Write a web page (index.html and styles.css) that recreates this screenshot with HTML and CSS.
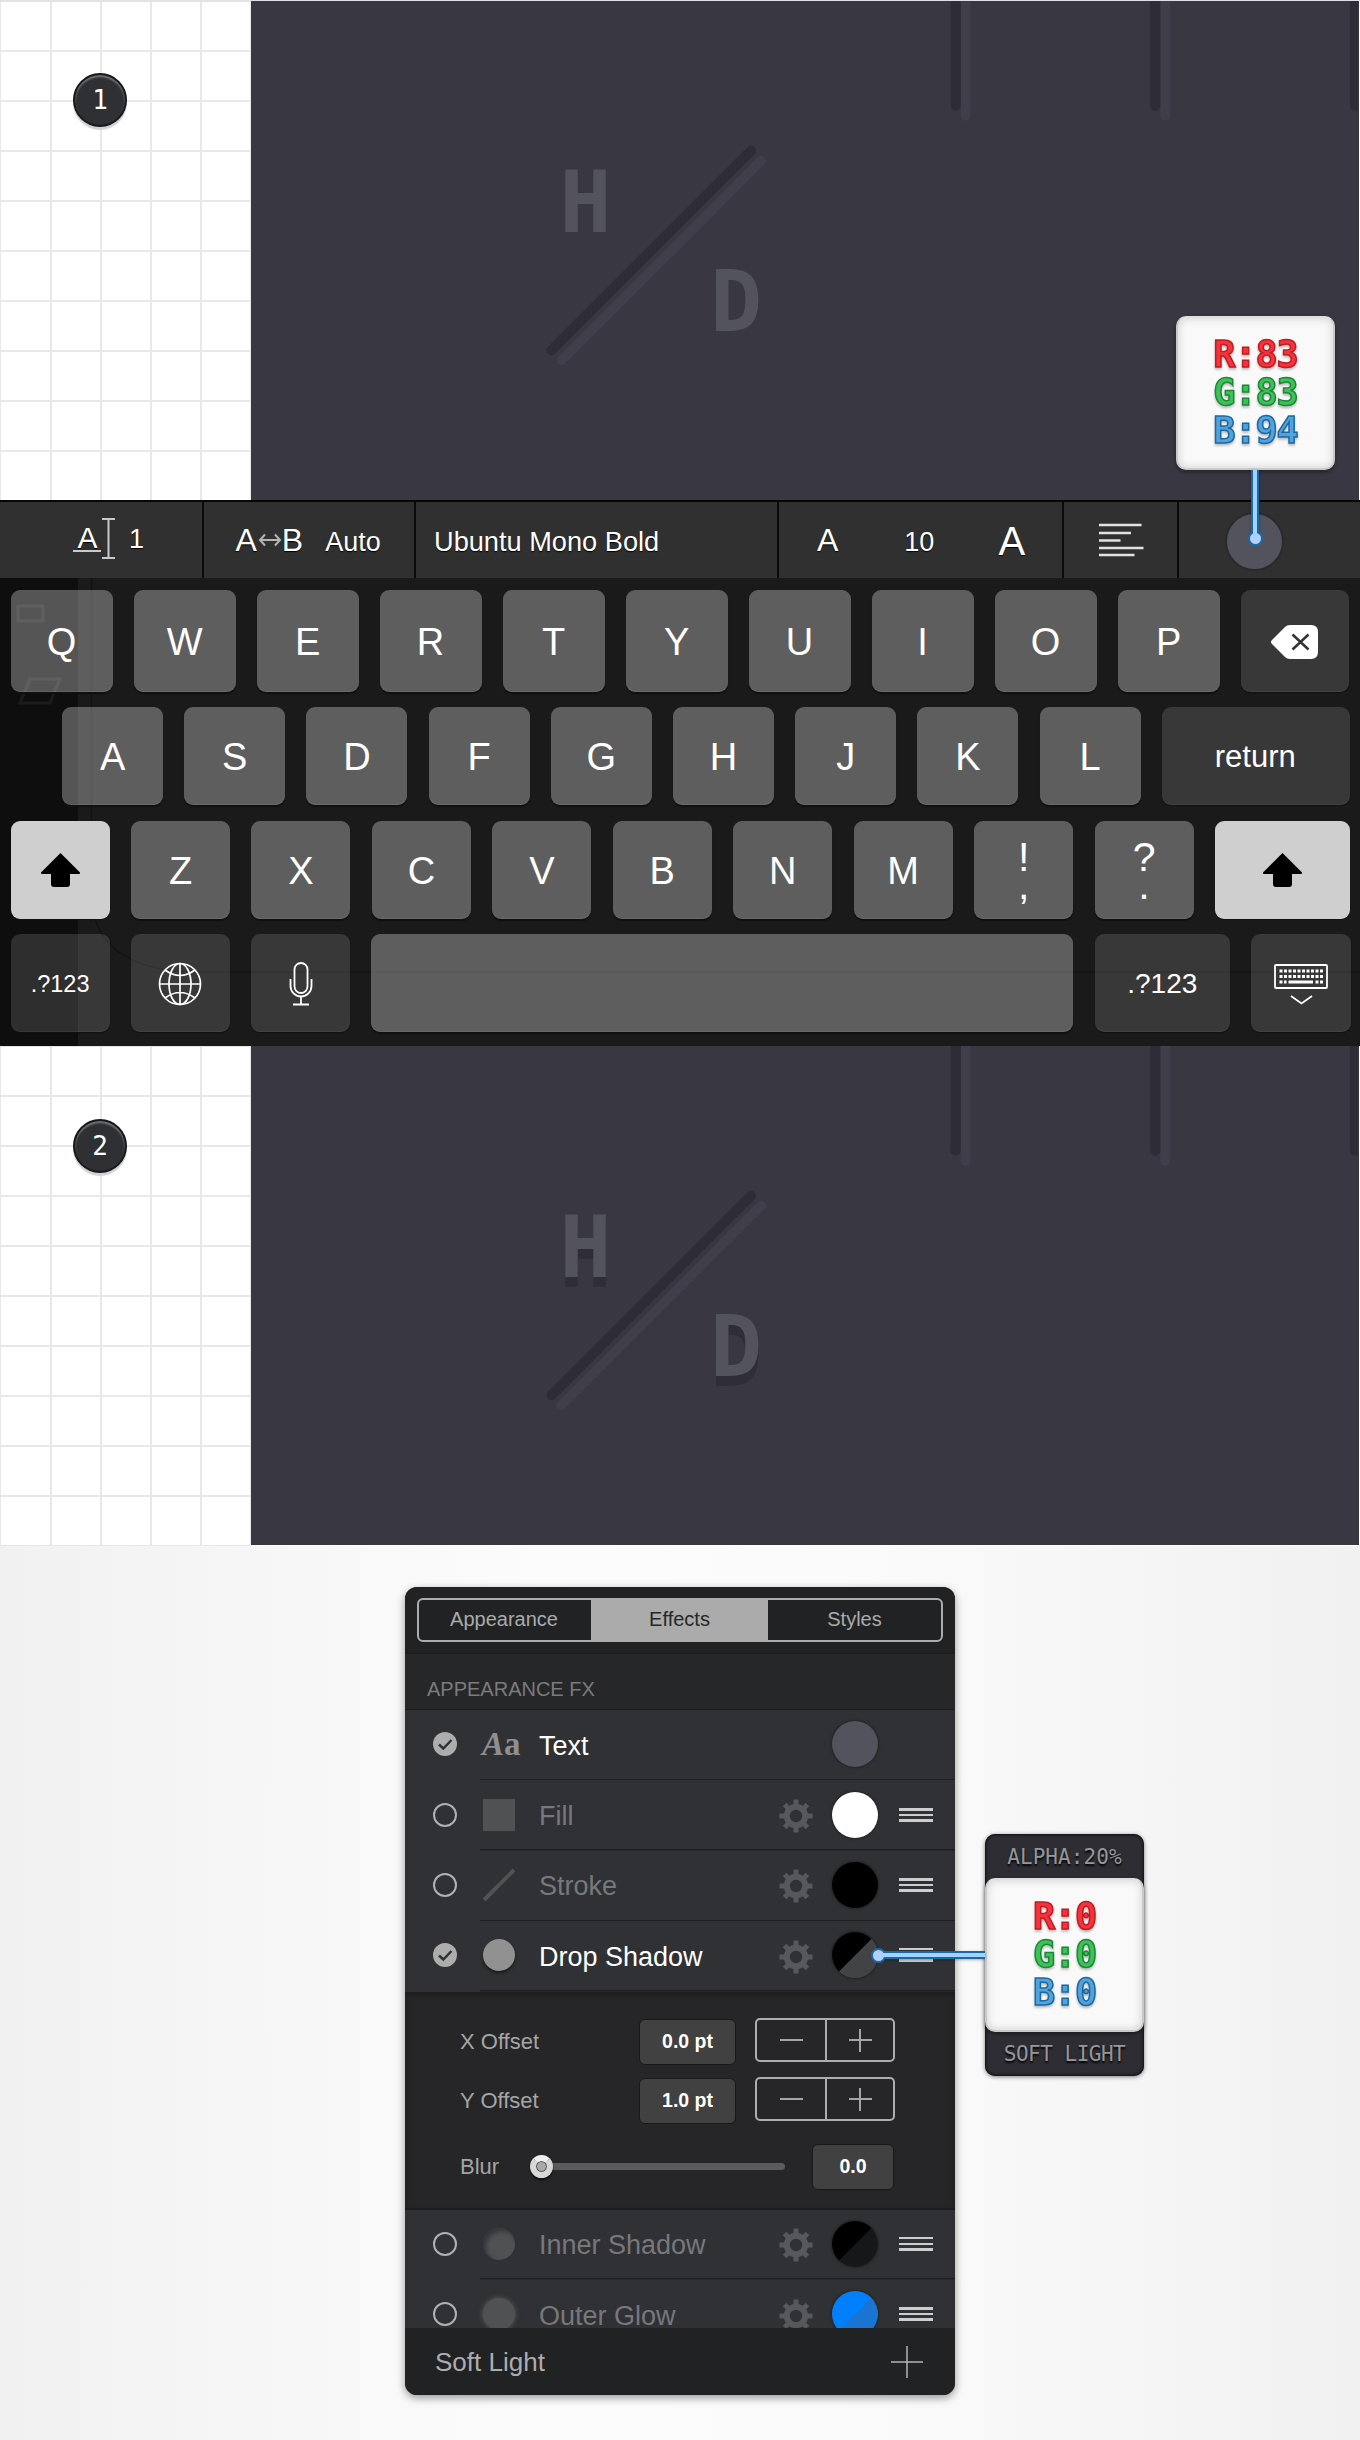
FILE: index.html
```html
<!DOCTYPE html>
<html lang="en">
<head>
<meta charset="utf-8">
<title>Dial lettering tutorial</title>
<link rel="stylesheet" href="styles.css">
</head>
<body>
<svg class="defs" aria-hidden="true">
  <defs>
    <symbol id="artboard" viewBox="0 0 1108 500">
      <g fill="none" stroke-width="10" stroke-linecap="round">
        <path class="ridge-light" d="M310 360 510 160M715-10V115M915-10V115"/>
        <path class="ridge-dark" d="M300 350 500 150M705-10V105M905-10V105M1105-10V105"/>
      </g>
    </symbol>
    <symbol id="gear" viewBox="-17 -17 34 34">
      <circle r="9.200" fill="none" stroke="currentColor" stroke-width="6"/>
      <g stroke="currentColor" stroke-width="5">
        <path d="M0-16.500V-11M0 16.500V11M-16.500 0H-11M16.500 0H11"/>
        <path d="M-11.400-11.400-8-8M11.400 11.400 8 8M-11.400 11.400-8 8M11.400-11.400 8-8"/>
      </g>
    </symbol>
    <symbol id="tick" viewBox="0 0 24 24">
      <circle cx="12" cy="12" r="12" fill="#adadad"/>
      <path d="M6 12.500 10.300 16.500 18.500 8" fill="none" stroke="#303134" stroke-width="2.400"/>
    </symbol>
    <symbol id="shift" viewBox="0 0 39 34">
      <path d="M19.500 0 39 19.500q.4 1.500-1 1.500H29V31q0 3-3 3H13q-3 0-3-3V21H1q-1.400 0-1-1.500Z"/>
    </symbol>
  </defs>
</svg>

<section class="canvas">
  <div class="gutter"><span class="step">1</span></div>
  <svg class="art" viewBox="0 0 1108 500">
    <use href="#artboard" width="1108" height="500"/>
    <text class="dial" x="334" y="231">H</text>
    <text class="dial" x="485" y="331">D</text>
  </svg>
</section>

<section class="keyboard">
  <div class="toolbar">
    <div class="tool tool-line">
      <svg width="44" height="44" viewBox="0 0 44 44"><text x="14.500" y="30.500" class="mini-a">A</text><path d="M0 34H28M29 2H42M29 41H42M35.500 2V41" stroke="#c9c9c9" stroke-width="2" fill="none"/></svg>
      <span>1</span>
    </div>
    <div class="tool tool-kern">
      <span class="a-mid">A</span>
      <svg width="22" height="14" viewBox="0 0 22 14"><path d="M1 7H21M6 1.500 1 7 6 12.500M16 1.500 21 7 16 12.500" fill="none" stroke="#b5b5b5" stroke-width="2"/></svg>
      <span class="a-mid">B</span><span class="auto">Auto</span>
    </div>
    <div class="tool tool-font">Ubuntu Mono Bold</div>
    <div class="tool tool-size"><span class="a-mid">A</span><span class="size">10</span><span class="a-big">A</span></div>
    <div class="tool tool-align"><svg width="45" height="34" viewBox="0 0 45 34"><path d="M0 2H42.500M0 10H32M0 17.500H21.500M0 25H44.500M0 32H35.500" stroke="#e2e2e2" stroke-width="2.600"/></svg></div>
    <div class="tool tool-color"><span class="text-color"></span></div>
  </div>
  <div class="keys">
    <div class="ghost">
      <svg width="1360" height="468" viewBox="0 0 1360 468"><g fill="none" stroke="#fff" stroke-opacity=".06" stroke-width="3"><path d="M18 28H43V43H18ZM30 101H60L50 125H20Z"/></g><path d="M91.500 0V325Q100 394 200 394H1360" fill="none" stroke="#000" stroke-opacity=".3" stroke-width="1.500"/></svg>
    </div>
    <div class="row row-1">
      <kbd>Q</kbd><kbd>W</kbd><kbd>E</kbd><kbd>R</kbd><kbd>T</kbd><kbd>Y</kbd><kbd>U</kbd><kbd>I</kbd><kbd>O</kbd><kbd>P</kbd>
      <kbd class="fn"><svg width="47" height="34" viewBox="0 0 47 34"><path d="M19 0H40Q47 0 47 7V27Q47 34 40 34H19Q16 34 14 32L1 19Q-1 17 1 15L14 2Q16 0 19 0Z" fill="#fff"/><path d="M21.500 9.500 37.500 24.500M37.500 9.500 21.500 24.500" stroke="#333" stroke-width="2.500"/></svg></kbd>
    </div>
    <div class="row row-2">
      <kbd>A</kbd><kbd>S</kbd><kbd>D</kbd><kbd>F</kbd><kbd>G</kbd><kbd>H</kbd><kbd>J</kbd><kbd>K</kbd><kbd>L</kbd><kbd class="fn return">return</kbd>
    </div>
    <div class="row row-3">
      <kbd class="lit"><svg width="39" height="34"><use href="#shift"/></svg></kbd>
      <kbd>Z</kbd><kbd>X</kbd><kbd>C</kbd><kbd>V</kbd><kbd>B</kbd><kbd>N</kbd><kbd>M</kbd>
      <kbd class="pair"><span>!</span><span>,</span></kbd><kbd class="pair"><span>?</span><span>.</span></kbd>
      <kbd class="lit"><svg width="39" height="34"><use href="#shift"/></svg></kbd>
    </div>
    <div class="row row-4">
      <kbd class="fn num-small">.?123</kbd>
      <kbd class="fn"><svg width="44" height="44" viewBox="-22 -22 44 44"><g fill="none" stroke="#fff" stroke-width="1.700"><circle r="20.500"/><ellipse rx="11" ry="20.500"/><path d="M0-20.500V20.500M-20.500 0H20.500M-15-14Q0-3 15-14M-15 14Q0 3 15 14"/></g></svg></kbd>
      <kbd class="fn"><svg width="24" height="44" viewBox="0 0 24 44"><g fill="none" stroke="#fff" stroke-width="1.800"><rect x="5.500" y="1" width="13" height="30" rx="6.500"/><path d="M1.500 17V24A10.500 10.500 0 0 0 22.500 24V17M12 34.500V42.500M4 42.500H20"/></g></svg></kbd>
      <kbd class="space"></kbd>
      <kbd class="fn num">.?123</kbd>
      <kbd class="fn"><svg width="54" height="42" viewBox="0 0 54 42"><g fill="none" stroke="#fff"><rect x="1" y="2" width="52" height="23" rx="1" stroke-width="1.800"/><path d="M5.500 8H49M5.500 13.500H49M5.500 19H12.500M41.500 19H49" stroke-width="3" stroke-dasharray="3 1.500"/><path d="M14.500 19H39" stroke-width="3"/><path d="M17 33 27.500 40.500 38 33" stroke-width="1.800"/></g></svg></kbd>
    </div>
  </div>
</section>

<section class="canvas canvas-second">
  <div class="gutter"><span class="step">2</span></div>
  <svg class="art" viewBox="0 0 1108 500">
    <use href="#artboard" width="1108" height="500"/>
    <g class="dropped">
      <text class="dial" x="334" y="231">H</text>
      <text class="dial" x="485" y="331">D</text>
    </g>
  </svg>
</section>

<section class="stage">
  <div class="panel">
    <div class="tabs"><div class="segments"><span>Appearance</span><span class="on">Effects</span><span>Styles</span></div></div>
    <div class="heading">APPEARANCE FX</div>
    <div class="fx on">
      <svg class="mark"><use href="#tick"/></svg>
      <span class="glyph aa"><span><em>A</em>a</span></span>
      <span class="name">Text</span><span></span>
      <i class="swatch slate"></i>
    </div>
    <div class="fx">
      <i class="mark ring"></i>
      <span class="glyph"><i class="square"></i></span>
      <span class="name">Fill</span><svg class="gear"><use href="#gear"/></svg>
      <i class="swatch white"></i><i class="grip"></i>
    </div>
    <div class="fx">
      <i class="mark ring"></i>
      <span class="glyph"><svg width="34" height="34" viewBox="0 0 34 34"><path d="M2 32 32 2" stroke="#515254" stroke-width="4"/></svg></span>
      <span class="name">Stroke</span><svg class="gear"><use href="#gear"/></svg>
      <i class="swatch black"></i><i class="grip"></i>
    </div>
    <div class="fx on last">
      <svg class="mark"><use href="#tick"/></svg>
      <span class="glyph"><i class="disc drop"></i></span>
      <span class="name">Drop Shadow</span><svg class="gear"><use href="#gear"/></svg>
      <i class="swatch half"></i><i class="grip"></i>
    </div>
    <div class="options">
      <div class="option"><label>X Offset</label><b class="value">0.0 pt</b><span class="stepper"><i></i><i class="plus"></i></span></div>
      <div class="option option-y"><label>Y Offset</label><b class="value">1.0 pt</b><span class="stepper"><i></i><i class="plus"></i></span></div>
      <div class="option option-blur"><label>Blur</label><span class="slider"><i></i></span><b class="value">0.0</b></div>
    </div>
    <div class="fx">
      <i class="mark ring"></i>
      <span class="glyph"><i class="disc inner"></i></span>
      <span class="name">Inner Shadow</span><svg class="gear"><use href="#gear"/></svg>
      <i class="swatch half-dark"></i><i class="grip"></i>
    </div>
    <div class="clip">
      <div class="fx">
        <i class="mark ring"></i>
        <span class="glyph"><i class="disc glow"></i></span>
        <span class="name">Outer Glow</span><svg class="gear"><use href="#gear"/></svg>
        <i class="swatch blue"></i><i class="grip"></i>
      </div>
    </div>
    <div class="footer"><span>Soft Light</span><svg width="32" height="32" viewBox="0 0 32 32"><path d="M0 16H32M16 0V32" stroke="#b4b4b4" stroke-width="1.500"/></svg></div>
  </div>
</section>

<aside class="callout callout-top">
  <div class="rgb"><span class="r">R:83</span><span class="g">G:83</span><span class="b">B:94</span></div>
  <span class="lead lead-down"></span>
</aside>
<aside class="callout callout-side">
  <span class="lead lead-left"></span>
  <div class="tag">ALPHA:20%</div>
  <div class="rgb"><span class="r">R:0</span><span class="g">G:0</span><span class="b">B:0</span></div>
  <div class="tag tag-wide">SOFT LIGHT</div>
</aside>
</body>
</html>
```
FILE: styles.css
```css
*, *::before, *::after { box-sizing: border-box; }
body {
  position: relative;
  width: 1360px;
  height: 2440px;
  margin: 0;
  overflow: hidden;
  background: #fff;
  font-family: "Liberation Sans", Arial, sans-serif;
}
.defs { position: absolute; width: 0; height: 0; }
svg { display: block; flex: none; overflow: visible; }
i { font-style: normal; }

/* Canvas with ruled gutter */
.canvas { display: flex; height: 500px; border-top: 1px solid #dfe1e8; }
.canvas-second { height: 501px; margin-top: -1px; }
.gutter {
  width: 251px;
  margin-top: -1px;
  padding: 73px 0 0 73px;
  background:
    linear-gradient(#e3e3e3, #e3e3e3) 0 0 / 251px 2px no-repeat,
    repeating-linear-gradient(90deg, #e8e8e8 0 1.500px, transparent 1.500px 50px),
    repeating-linear-gradient(#e8e8e8 0 2px, transparent 2px 50px) #fff;
}
.step {
  display: grid;
  place-items: center;
  width: 54px;
  height: 54px;
  border: 2px solid #17181b;
  border-radius: 50%;
  background: #2f3033;
  box-shadow: inset 0 2px 2px #77787b, 0 3px 1px #d3d3d3;
  color: #fff;
  font: 26px "DejaVu Sans Mono", monospace;
}
.art { width: 1108px; height: 500px; margin-top: -1px; background: #393742; overflow: hidden; border-top: 1px solid #dfe1e8; }
.canvas-second .step { margin-top: 1px; }
.ridge-light { stroke: #403e4b; }
.ridge-dark { stroke: #2e2c37; }
.dial { fill: #53535e; font: bold 86.500px "DejaVu Sans Mono", monospace; text-anchor: middle; }
.dropped { filter: drop-shadow(0 10px 0 #2f2e38); }

/* Keyboard */
.keyboard { position: relative; z-index: 1; height: 546px; background: #1a1a1a; }
.toolbar {
  display: grid;
  grid-template-columns: 203.500px 212.500px 363px 285px 115px 181px;
  height: 78px;
  border-top: 2px solid #060609;
  background: #303030;
  color: #fff;
  font-size: 27px;
}
.tool { display: flex; align-items: center; border-right: 2px solid #0a0a0a; text-shadow: 0 1px 1px #000; }
.tool:last-child { border: 0; }
.tool-line { padding: 0 0 2px 73px; gap: 12px; }
.mini-a { fill: #fff; font-size: 30px; text-anchor: middle; }
.tool-kern { padding-left: 32px; }
.a-mid { padding-top: 1px; font-size: 32px; }
.tool-kern svg { margin: 0 1px 0 2px; }
.auto { margin-left: 22px; padding-top: 4px; }
.tool-font { padding: 4px 0 0 18px; font-size: 27.200px; }
.tool-size { padding-left: 38px; }
.size { margin: 4px 64px 0 66px; }
.a-big { padding-top: 2px; font-size: 40px; }
.tool-align { padding-left: 35px; }
.tool-color { padding: 2px 0 0 46px; }
.text-color { width: 59px; height: 59px; border: 2px solid #29292e; border-radius: 50%; background: #53535e; }

/* Keys are translucent so the dimmed app below them shows through */
.keys { position: relative; padding: 12px 0 0 10.600px; }
.ghost { position: absolute; inset: 0 auto auto 0; height: 468px; overflow: hidden; background: linear-gradient(90deg, #0e0e0e 0 78px, transparent 78px); }
.row { position: relative; display: grid; gap: 21px; width: 1340px; }
.row-1 { grid-template-columns: repeat(10, 102px) 108px; height: 102px; margin-bottom: 15px; }
.row-2 { grid-template-columns: repeat(9, 101px) 188px; height: 98px; margin: 0 0 16px 51.500px; width: 1288px; column-gap: 21.200px; }
.row-3 { grid-template-columns: repeat(10, 99px) 135px; height: 98px; margin-bottom: 15px; column-gap: 21.450px; }
.row-4 { grid-template-columns: 99px 99px 99px 702px 135px 100px; height: 98px; column-gap: 21.300px; }
kbd {
  display: flex;
  align-items: center;
  justify-content: center;
  padding-top: 2px;
  border-radius: 9px;
  background: rgba(255,255,255,.297);
  box-shadow: 0 2px 1px #101010, inset 0 -1px rgba(255,255,255,.07);
  color: #fff;
  font: 38px "Liberation Sans", Arial, sans-serif;
}
.fn { background: rgba(255,255,255,.135); box-shadow: 0 1px 1px #111, inset 0 -1px rgba(255,255,255,.05); }
.lit { padding-top: 0; background: #cfcfcf; box-shadow: 0 1px 1px #111; }
.return { padding-right: 1px; font-size: 31px; }
.num-small { font-size: 23.500px; }
.num { font-size: 28px; }
.pair { flex-direction: column; font-size: 41px; line-height: 46px; }
.pair span + span { margin-top: -18px; }

/* Stage and effects panel */
.stage {
  display: flex;
  justify-content: center;
  height: 894px;
  padding-top: 41px;
  background: linear-gradient(90deg, #f1f1f1, #fcfcfc 40%, #fbfbfb 62%, #f1f1f1);
}
.panel {
  width: 550px;
  height: 808px;
  overflow: hidden;
  border-radius: 12px;
  background: #262729;
  box-shadow: 0 3px 9px rgba(0,0,0,.4);
}
.tabs { height: 67px; padding: 11px 12px; border-bottom: 2px solid #1c1d1f; background: #212224; }
.segments {
  display: grid;
  grid-template-columns: 172px 177px 1fr;
  height: 44px;
  border: 2px solid #adadad;
  border-radius: 6px;
  color: #ababab;
  font-size: 20px;
  line-height: 38px;
  text-align: center;
}
.segments span:first-child { padding-right: 2px; }
.segments .on { background: #ababab; color: #262729; }
.heading { height: 56px; padding: 24px 22px 0; border-bottom: 1px solid #1b1c1e; color: #7b7b7e; font-size: 20px; }
.fx {
  display: grid;
  grid-template-columns: 54px 46px 246px 34px 46px 34px;
  align-items: center;
  height: 70.400px;
  padding: 0 0 2px 28px;
  background: linear-gradient(#1f2022, #1f2022) 75px 100% / 475px 1.500px no-repeat #303134;
  color: #77787b;
}
.mark { width: 24px; height: 24px; }
.ring { border: 2px solid #b1b1b1; border-radius: 50%; }
.glyph { display: grid; place-items: center; width: 34px; height: 36px; color: #8f8f91; }
.fx .glyph { margin-left: -5px; }
.fx .name { padding: 3px 0 0 6px; font-size: 27px; line-height: 32px; }
.fx.on .name { color: #fff; }
.glyph.aa { font: bold 33px "Liberation Serif", serif; }
.square { width: 32px; height: 32px; background: #505153; }
.disc { width: 32px; height: 32px; border-radius: 50%; background: #505153; }
.drop { background: #919192; box-shadow: 0 2px 3px #18191a; }
.inner { box-shadow: inset 3px 3px 4px #34353a; }
.glow { box-shadow: 0 0 4px 1px #505153; }
.gear { width: 34px; height: 34px; color: #57585b; margin: 3px 0 0 0; }
.swatch { justify-self: end; width: 46px; height: 46px; margin-right: -19px; border-radius: 50%; box-shadow: 0 0 2px 1px #232427; }
.slate { background: #53535e; }
.white { background: #fff; }
.black { background: #000; }
.half { background: linear-gradient(135deg, #000 50%, #424345 50%); }
.half-dark { background: linear-gradient(135deg, #000 50%, #161719 50%); }
.blue { background: linear-gradient(135deg, #0080ff 50%, #1974d2 50%); }
.grip { width: 34px; height: 14px; margin-left: 40px; background: linear-gradient(#cdcdd0 0 2.500px, transparent 2.500px 5.700px, #cdcdd0 5.700px 8.200px, transparent 8.200px 11.400px, #cdcdd0 11.400px 14px); }
.options { height: 218px; padding: 27px 60px 0 55px; border-bottom: 2px solid #1b1c1e; background: #262628; box-shadow: inset 0 3px 5px #1d1d1f; }
.option { display: flex; align-items: center; height: 46px; }
.option label { width: 179px; color: #a5a5a7; font-size: 22px; }
.option-y { margin-top: 13px; }
.option-blur { margin-top: 20px; }
.option-blur label { width: 70px; }
.value {
  display: grid;
  place-items: center;
  width: 97px;
  height: 46px;
  border: 1px solid #19191b;
  border-radius: 6px;
  background: #414141;
  color: #fff;
  font-size: 19.500px;
}
.stepper { display: grid; grid-template-columns: 1fr 1fr; width: 140px; height: 44px; margin: -3px 0 0 19px; border: 2px solid #adadad; border-radius: 5px; }
.stepper i { background: linear-gradient(#a5a5a5, #a5a5a5) center / 23px 2px no-repeat; }
.stepper .plus {
  border-left: 2px solid #adadad;
  background: linear-gradient(#a5a5a5, #a5a5a5) center / 23px 2px no-repeat, linear-gradient(#a5a5a5, #a5a5a5) center / 2px 23px no-repeat;
}
.slider { display: flex; align-items: center; width: 255px; height: 7px; margin-right: 27px; border-radius: 4px; background: #5b5b5d; }
.slider i { width: 23px; height: 23px; border: 6px solid #d7d7d7; border-top-color: #efefef; border-radius: 50%; background: #a9a9a9; box-shadow: inset 0 0 0 1px #555, 0 2px 2px #111; }
.option-blur .value { width: 82px; }
.clip { height: 48px; overflow: hidden; }
.footer { display: flex; justify-content: space-between; align-items: center; height: 67px; padding: 2px 32px 0 30px; background: #212224; color: #adadad; font-size: 26px; }

/* Callouts pinned over the screens */
.callout { position: absolute; z-index: 2; width: 159px; }
.callout-top { left: 1176px; top: 316px; }
.callout-side { left: 985px; top: 1834px; height: 242px; border-radius: 10px; background: #2d2d33; box-shadow: inset 0 0 3px 1px #111, 0 1px 4px rgba(0,0,0,.5); }
.rgb {
  display: flex;
  flex-direction: column;
  align-items: center;
  height: 154px;
  padding-top: 18px;
  border: 2px solid #c9c9c9;
  border-top-color: #dedede;
  border-radius: 10px;
  background: #f9f9f9;
  box-shadow: inset 0 0 8px #ccc, 0 2px 4px rgba(0,0,0,.4);
  font: bold 37px/38px "DejaVu Sans Mono", monospace;
  letter-spacing: -1.200px;
  -webkit-text-stroke-width: 1.500px;
}
.r { color: #f2353d; -webkit-text-stroke-color: #c81822; }
.g { color: #3cc356; -webkit-text-stroke-color: #20863a; }
.b { color: #52a2de; -webkit-text-stroke-color: #1d699f; }
.rgb span { filter: drop-shadow(0 2px 1px #bbb); }
.tag { display: flex; align-items: center; justify-content: center; height: 44px; padding-top: 2px; color: #96969b; font: 21px "DejaVu Sans Mono", monospace; letter-spacing: .1px; text-shadow: 0 2px 2px #050505; }
.tag-wide { padding-top: 0; letter-spacing: -.500px; }
.lead { position: absolute; border: 2px solid #1869a8; background: #a3d2ff; box-shadow: 0 1px 3px rgba(0,0,0,.3); }
.lead-down { left: 75px; top: 154px; width: 8px; height: 66px; border-width: 0 2px; }
.lead-left { left: -101px; top: 117px; width: 101px; height: 8px; border-width: 2px 0; }
.lead::after { content: ""; position: absolute; width: 15px; height: 15px; border: 2px solid #1869a8; border-radius: 50%; background: #b1d1fb; }
.lead-down::after { left: -5.500px; top: 61px; }
.lead-left::after { left: -13px; top: -5.500px; }
/* Opens the dot into its lead */
.lead::before { content: ""; position: absolute; z-index: 1; background: #a8d2fe; }
.lead-down::before { left: 0; top: 55px; width: 4px; height: 12px; }
.lead-left::before { left: -5px; top: 0; width: 12px; height: 4px; }
```
